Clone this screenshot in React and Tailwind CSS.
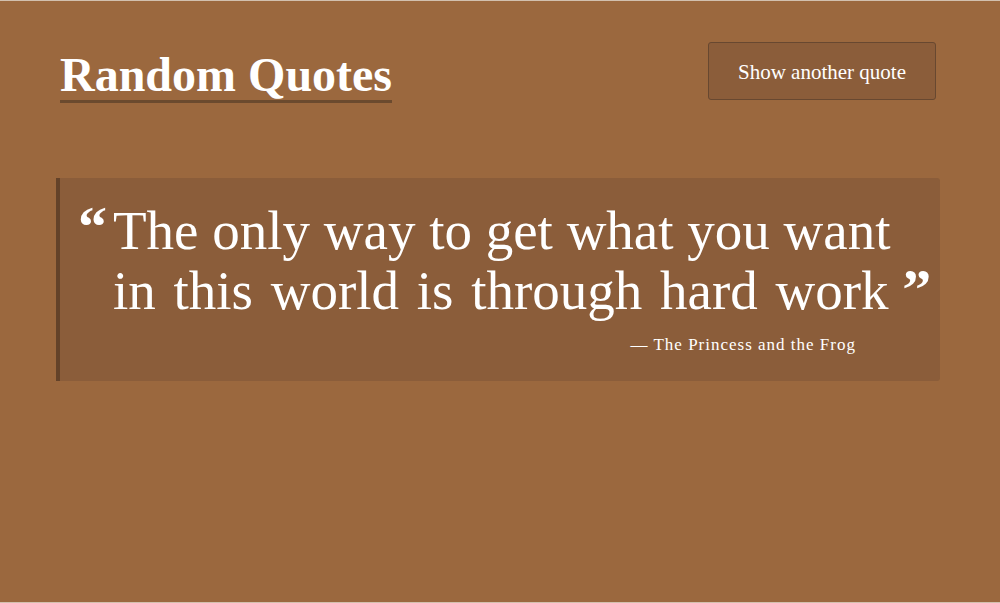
import React from 'react';

const serif = { fontFamily: '"Liberation Serif", "DejaVu Serif", serif' };

export default function App() {
  const quote = {
    first: 'The only way to get what you want',
    second: 'in this world is through hard work',
    author: 'The Princess and the Frog',
  };

  return (
    <div
      style={serif}
      className="h-[603px] bg-[#9b683e] border-t border-b border-[#d2c0ae] pl-[56px] pr-[60px] text-white"
    >
      <header className="flex items-start justify-between pt-[41px] pl-[4px] pr-[4px]">
        <h1 className="mt-[9px] text-[48px] leading-[48px] font-bold pb-[1px] border-b-[3px] border-[#6b4a2e]">
          Random Quotes
        </h1>
        <button className="h-[58px] w-[228px] bg-[#8b5d3a] border border-[#684830] rounded-[3px] pt-[4px] text-[21px] text-white">
          Show another quote
        </button>
      </header>

      <div className="mt-[75px] bg-[#8b5d3a] border-l-4 border-[#634229] rounded-r-[3px] pt-[22px] pb-[24px]">
        <div className="flex items-baseline pl-[18px]">
          <span className="w-[35px] shrink-0 text-[58px] leading-[60px] font-bold -translate-y-[3px]">“</span>
          <p className="text-[55px] leading-[60px] whitespace-nowrap">
            {quote.first}
            <br />
            <span className="[word-spacing:4px]">{quote.second}</span>{' '}
            <span className="text-[58px] leading-[0] font-bold">”</span>
          </p>
        </div>
        <p className="mt-[12px] pr-[84px] text-right text-[17px] leading-[24px] tracking-[1px]">
          — {quote.author}
        </p>
      </div>
    </div>
  );
}
